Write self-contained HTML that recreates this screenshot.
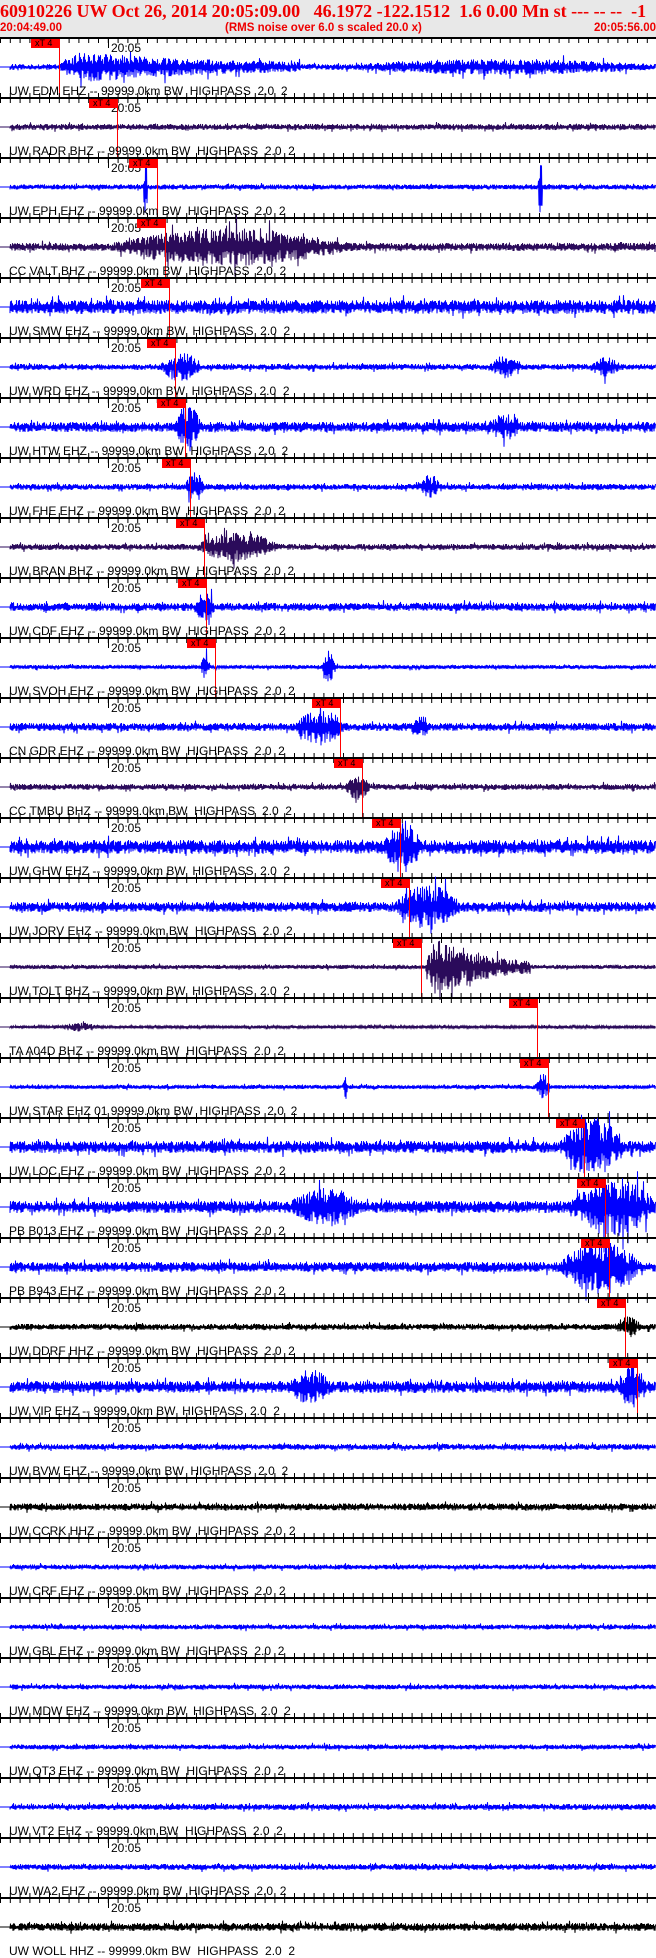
<!DOCTYPE html>
<html><head><meta charset="utf-8">
<style>
body{margin:0;background:#fff;width:656px;height:1958px;overflow:hidden;position:relative;font-family:"Liberation Sans",Arial,sans-serif}
#hdr{position:absolute;left:0;top:0;width:656px;height:37px;background:#e8e8e8}
#t1{position:absolute;left:0;top:1px;font:bold 18px "Liberation Serif",serif;color:#e00;white-space:pre}
.t2{position:absolute;top:22px;font:bold 11.5px "Liberation Sans",sans-serif;color:#e00;white-space:pre}
#wrap{position:absolute;left:0;top:0;width:656px;height:1958px}
.lab{position:absolute;left:9px;font-size:12px;color:#000;white-space:pre;line-height:13px}
.tm{position:absolute;left:111px;font-size:12px;color:#000;line-height:12px}
.pk{position:absolute;width:28px;height:9px;background:#f00;font-size:9px;line-height:9px;color:#000;text-indent:4px}
</style></head><body>
<div id="hdr">
<div id="t1">60910226 UW Oct 26, 2014 20:05:09.00   46.1972 -122.1512  1.6 0.00 Mn st --- -- --  -1</div>
<div class="t2" style="left:0">20:04:49.00</div>
<div class="t2" style="left:225px">(RMS noise over 6.0 s scaled 20.0 x)</div>
<div class="t2" style="right:0">20:05:56.00</div>
</div>
<div id="wrap"></div>
<div id="labs">
<div class="lab" style="top:85px">UW EDM EHZ -- 99999.0km BW  HIGHPASS  2.0  2</div>
<div class="lab" style="top:145px">UW RADR BHZ -- 99999.0km BW  HIGHPASS  2.0  2</div>
<div class="lab" style="top:205px">UW EPH EHZ -- 99999.0km BW  HIGHPASS  2.0  2</div>
<div class="lab" style="top:265px">CC VALT BHZ -- 99999.0km BW  HIGHPASS  2.0  2</div>
<div class="lab" style="top:325px">UW SMW EHZ -- 99999.0km BW  HIGHPASS  2.0  2</div>
<div class="lab" style="top:385px">UW WRD EHZ -- 99999.0km BW  HIGHPASS  2.0  2</div>
<div class="lab" style="top:445px">UW HTW EHZ -- 99999.0km BW  HIGHPASS  2.0  2</div>
<div class="lab" style="top:505px">UW FHE EHZ -- 99999.0km BW  HIGHPASS  2.0  2</div>
<div class="lab" style="top:565px">UW BRAN BHZ -- 99999.0km BW  HIGHPASS  2.0  2</div>
<div class="lab" style="top:625px">UW CDF EHZ -- 99999.0km BW  HIGHPASS  2.0  2</div>
<div class="lab" style="top:685px">UW SVOH EHZ -- 99999.0km BW  HIGHPASS  2.0  2</div>
<div class="lab" style="top:745px">CN GDR EHZ -- 99999.0km BW  HIGHPASS  2.0  2</div>
<div class="lab" style="top:805px">CC TMBU BHZ -- 99999.0km BW  HIGHPASS  2.0  2</div>
<div class="lab" style="top:865px">UW GHW EHZ -- 99999.0km BW  HIGHPASS  2.0  2</div>
<div class="lab" style="top:925px">UW JORV EHZ -- 99999.0km BW  HIGHPASS  2.0  2</div>
<div class="lab" style="top:985px">UW TOLT BHZ -- 99999.0km BW  HIGHPASS  2.0  2</div>
<div class="lab" style="top:1045px">TA A04D BHZ -- 99999.0km BW  HIGHPASS  2.0  2</div>
<div class="lab" style="top:1105px">UW STAR EHZ 01 99999.0km BW  HIGHPASS  2.0  2</div>
<div class="lab" style="top:1165px">UW LOC EHZ -- 99999.0km BW  HIGHPASS  2.0  2</div>
<div class="lab" style="top:1225px">PB B013 EHZ -- 99999.0km BW  HIGHPASS  2.0  2</div>
<div class="lab" style="top:1285px">PB B943 EHZ -- 99999.0km BW  HIGHPASS  2.0  2</div>
<div class="lab" style="top:1345px">UW DDRF HHZ -- 99999.0km BW  HIGHPASS  2.0  2</div>
<div class="lab" style="top:1405px">UW VIP EHZ -- 99999.0km BW  HIGHPASS  2.0  2</div>
<div class="lab" style="top:1465px">UW BVW EHZ -- 99999.0km BW  HIGHPASS  2.0  2</div>
<div class="lab" style="top:1525px">UW CCRK HHZ -- 99999.0km BW  HIGHPASS  2.0  2</div>
<div class="lab" style="top:1585px">UW CRF EHZ -- 99999.0km BW  HIGHPASS  2.0  2</div>
<div class="lab" style="top:1645px">UW GBL EHZ -- 99999.0km BW  HIGHPASS  2.0  2</div>
<div class="lab" style="top:1705px">UW MDW EHZ -- 99999.0km BW  HIGHPASS  2.0  2</div>
<div class="lab" style="top:1765px">UW QT3 EHZ -- 99999.0km BW  HIGHPASS  2.0  2</div>
<div class="lab" style="top:1825px">UW VT2 EHZ -- 99999.0km BW  HIGHPASS  2.0  2</div>
<div class="lab" style="top:1885px">UW WA2 EHZ -- 99999.0km BW  HIGHPASS  2.0  2</div>
<div class="lab" style="top:1945px">UW WOLL HHZ -- 99999.0km BW  HIGHPASS  2.0  2</div>
</div>
<div id="tms">
<div class="tm" style="top:42px">20:05</div><div class="tm" style="top:102px">20:05</div><div class="tm" style="top:162px">20:05</div><div class="tm" style="top:222px">20:05</div>
<div class="tm" style="top:282px">20:05</div><div class="tm" style="top:342px">20:05</div><div class="tm" style="top:402px">20:05</div><div class="tm" style="top:462px">20:05</div>
<div class="tm" style="top:522px">20:05</div><div class="tm" style="top:582px">20:05</div><div class="tm" style="top:642px">20:05</div><div class="tm" style="top:702px">20:05</div>
<div class="tm" style="top:762px">20:05</div><div class="tm" style="top:822px">20:05</div><div class="tm" style="top:882px">20:05</div><div class="tm" style="top:942px">20:05</div>
<div class="tm" style="top:1002px">20:05</div><div class="tm" style="top:1062px">20:05</div><div class="tm" style="top:1122px">20:05</div><div class="tm" style="top:1182px">20:05</div>
<div class="tm" style="top:1242px">20:05</div><div class="tm" style="top:1302px">20:05</div><div class="tm" style="top:1362px">20:05</div><div class="tm" style="top:1422px">20:05</div>
<div class="tm" style="top:1482px">20:05</div><div class="tm" style="top:1542px">20:05</div><div class="tm" style="top:1602px">20:05</div><div class="tm" style="top:1662px">20:05</div>
<div class="tm" style="top:1722px">20:05</div><div class="tm" style="top:1782px">20:05</div><div class="tm" style="top:1842px">20:05</div><div class="tm" style="top:1902px">20:05</div>
</div>
<div id="pks"></div>
<script>
(function(){
var B='#0000ff',P='#2b0b5b',K='#000000';
var cfg=[
[B,3,[[59,300,16,1],[350,650,5,0]]],
[P,3,[]],
[B,2.5,[[143,147,26,0],[538,542,30,0]]],
[P,4,[[110,350,15,0]]],
[B,7,[]],
[B,3,[[160,200,12,0],[490,520,9,0],[590,620,7,0]]],
[B,5,[[175,200,20,0],[490,520,9,0]]],
[B,3,[[185,205,12,0],[420,440,10,0]]],
[P,3,[[195,280,12,0]]],
[B,4,[[195,215,12,0]]],
[B,2,[[322,335,14,0],[200,210,10,0]]],
[B,4,[[295,345,14,0],[410,430,8,0]]],
[P,3,[[345,370,10,0]]],
[B,7,[[385,420,20,0]]],
[B,5,[[395,460,18,0]]],
[P,2,[[425,530,32,1]]],
[P,1.5,[[60,100,3,0]]],
[B,2,[[343,347,12,0],[535,550,12,0]]],
[B,6,[[560,625,24,0]]],
[B,6,[[290,360,14,0],[570,656,24,0]]],
[B,5,[[560,640,24,0]]],
[K,3,[[615,640,8,0]]],
[B,6,[[290,330,12,0],[620,645,18,0]]],
[B,3,[]],[K,3.5,[]],[B,2.5,[]],[B,2.5,[]],[B,2.5,[]],[B,2.5,[]],[B,3,[]],[B,3,[]],[K,4,[]]
];
var picks=[59,117,157,165,169,175,185,190,204,206,215,340,362,400,409,421,537,548,584,605,609,625,637];
var st=987654321;
function r(){st|=0;st=st+0x6D2B79F5|0;var t=Math.imul(st^st>>>15,1|st);t=t+Math.imul(t^t>>>7,61|t)^t;return ((t^t>>>14)>>>0)/4294967296;}
var h=[];
h.push('<svg xmlns="http://www.w3.org/2000/svg" width="656" height="1958" style="position:absolute;left:0;top:0">');
for(var k=0;k<32;k++){
 var top=37+k*60,base=top+30,c=cfg[k];
 h.push('<rect x="0" y="'+top+'" width="656" height="2" fill="#000"/>');
 for(var x=0;x<656;x+=9.8){
  var xs=x.toFixed(1);
  h.push('<rect x="'+xs+'" y="'+(top+2)+'" width="1" height="4" fill="#000"/>');
  if(k>0)h.push('<rect x="'+xs+'" y="'+(top-4)+'" width="1" height="4" fill="#000"/>');
 }
 h.push('<rect x="108" y="'+(top+2)+'" width="1" height="9" fill="#000"/>');
 var d='M0 '+base+' L10 '+base;
 var sg=1;
 for(var x2=10;x2<656;x2+=0.5){
  var a=c[1];
  for(var j=0;j<c[2].length;j++){var b=c[2][j];
   if(x2>=b[0]&&x2<=b[1]){var t=(x2-b[0])/(b[1]-b[0]+1);var e=b[3]?Math.min(1,t*10)*Math.exp(-t*2):Math.sin(Math.PI*t);a+=b[2]*e;}}
  var v=sg*(0.2+0.8*r());if(r()<0.06)v*=1.7;sg=-sg;
  d+=' L'+x2+' '+(base+v*a).toFixed(1);
 }
 h.push('<path d="'+d+'" stroke="'+c[0]+'" stroke-width="1" fill="none"/>');
 if(k<picks.length){h.push('<rect x="'+picks[k]+'" y="'+(top+2)+'" width="1" height="58" fill="#f00"/>');}
}
h.push('</svg>');
document.getElementById('wrap').innerHTML=h.join('');
var ph='';for(var q=0;q<picks.length;q++){ph+='<div class="pk" style="left:'+(picks[q]-28)+'px;top:'+(37+q*60+2)+'px">xT 4</div>';}
document.getElementById('pks').innerHTML=ph;
})();
</script>
</body></html>
